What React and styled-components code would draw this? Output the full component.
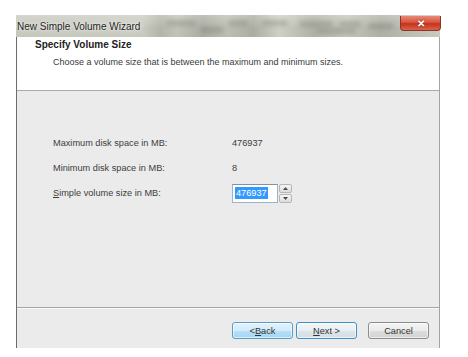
import React from "react";
import styled, { createGlobalStyle } from "styled-components";

const Global = createGlobalStyle`
  html, body { margin: 0; padding: 0; background: #ffffff; }
  body { font-family: "Liberation Sans", Arial, sans-serif; }
`;

const Page = styled.div`
  width: 468px;
  height: 357px;
  padding: 15px 0 0 16px;
  box-sizing: border-box;
  background: #ffffff;
`;

const Window = styled.div`
  width: 424px;
  height: 333px;
  display: flex;
  flex-direction: column;
`;

const TitleBar = styled.div`
  position: relative;
  height: 22px;
  display: flex;
  align-items: center;
  justify-content: space-between;
  overflow: visible;
  background:
    linear-gradient(180deg, rgba(255,255,255,0.25) 0%, rgba(255,255,255,0) 60%),
    linear-gradient(90deg, #c6c8bd 0%, #c9cabf 30%, #b3b4aa 34%, #c2c3b8 38%, #aaaba1 44%, #bdbeb3 50%, #abaca2 56%, #cfd0c5 62%, #b1b2a7 70%, #c4c5ba 78%, #aeafa5 86%, #cacbc0 100%);
`;

const Glass = styled.div`
  position: absolute;
  inset: 0;
  overflow: hidden;
  pointer-events: none;
`;

const Smudge = styled.span`
  position: absolute;
  height: 6px;
  border-radius: 3px;
  background: rgba(120, 122, 114, 0.35);
  filter: blur(2px);
`;

const Title = styled.span`
  position: relative;
  padding-left: 1px;
  font-size: 10px;
  color: #1d1d1d;
  text-shadow: 0 0 6px rgba(255,255,255,0.9), 0 0 2px rgba(255,255,255,0.9);
`;

const CloseButton = styled.div`
  position: relative;
  align-self: flex-start;
  margin-top: 1px;
  margin-right: -1px;
  width: 41px;
  height: 15px;
  box-sizing: border-box;
  border: 1px solid #8e3326;
  border-top: none;
  border-radius: 0 0 4px 4px;
  background: linear-gradient(180deg, #e98a77 0%, #d9553f 45%, #c5321c 55%, #d8654c 100%);
  display: flex;
  align-items: center;
  justify-content: center;
  color: #ffffff;
  font-size: 10px;
  font-weight: bold;
  text-shadow: 0 0 2px #7a2418;
`;

const Body = styled.div`
  flex: 1;
  display: flex;
  flex-direction: column;
  border-left: 1px solid #6c6c6c;
  border-right: 1px solid #a3a3a3;
  background: #ebebeb;
`;

const Header = styled.div`
  height: 51px;
  background: #ffffff;
  border-bottom: 1px solid #a9a9a9;
  padding-top: 2px;
  box-sizing: content-box;
  display: flex;
  flex-direction: column;
`;

const HeaderTitle = styled.div`
  padding-left: 18px;
  font-size: 10px;
  line-height: 12px;
  font-weight: bold;
  color: #222222;
`;

const HeaderSub = styled.div`
  margin-top: 5px;
  padding-left: 36px;
  font-size: 9px;
  line-height: 12px;
  color: #3a3a3a;
`;

const Content = styled.div`
  flex: 1;
  padding: 40px 0 0 36px;
  display: grid;
  grid-template-columns: 179px auto;
  grid-auto-rows: 24px;
  row-gap: 1px;
  align-content: start;
  align-items: center;
  background: #ebebeb;
`;

const Label = styled.div`
  font-size: 9.2px;
  color: #3d3d3d;
  u { text-decoration: underline; }
`;

const Value = styled.div`
  font-size: 9.2px;
  color: #3d3d3d;
`;

const Spin = styled.div`
  display: flex;
  align-items: stretch;
  gap: 1px;
  height: 19px;
`;

const SpinInput = styled.div`
  width: 46px;
  box-sizing: border-box;
  border: 1px solid #9fb3c8;
  border-top-color: #7f93a8;
  background: #ffffff;
  display: flex;
  align-items: center;
  padding-left: 2px;
`;

const Selected = styled.span`
  background: #3399ff;
  color: #ffffff;
  font-size: 9.2px;
  line-height: 12px;
  padding: 0 1px;
`;

const SpinButtons = styled.div`
  width: 13px;
  display: flex;
  flex-direction: column;
  gap: 1px;
`;

const SpinBtn = styled.div`
  flex: 1;
  box-sizing: border-box;
  border: 1px solid #b6b6b6;
  border-radius: 2px;
  background: linear-gradient(180deg, #f6f6f6, #dcdcdc);
  display: flex;
  align-items: center;
  justify-content: center;
`;

const Separator = styled.div`
  height: 1px;
  background: #a4a4a4;
  border-bottom: 1px solid #fafafa;
`;

const Footer = styled.div`
  height: 39px;
  display: flex;
  justify-content: flex-end;
  align-items: flex-start;
  padding: 13px 10px 0 0;
  box-sizing: border-box;
  background: #ebebeb;
`;

const variants = {
  hover: {
    bg: "linear-gradient(180deg, #e3f2fc 0%, #d2ebfb 50%, #b7e0f8 52%, #a3d5f2 100%)",
    border: "#5b9dc9",
  },
  default: {
    bg: "linear-gradient(180deg, #f3f6f8 0%, #e9eef2 50%, #dce4ea 52%, #d6dee5 100%)",
    border: "#3c91c5",
  },
  normal: {
    bg: "linear-gradient(180deg, #f4f4f4 0%, #ebebeb 50%, #dddddd 52%, #d2d2d2 100%)",
    border: "#8c8c8c",
  },
};

const Button = styled.div`
  width: 61px;
  height: 17px;
  margin-left: ${(p) => p.$gap}px;
  box-sizing: border-box;
  border: 1px solid ${(p) => variants[p.$variant].border};
  border-radius: 3px;
  background: ${(p) => variants[p.$variant].bg};
  box-shadow: inset 0 0 0 1px rgba(255,255,255,0.6);
  display: flex;
  align-items: center;
  justify-content: center;
  font-size: 9.2px;
  color: #333333;
  u { text-decoration: underline; }
`;

function Arrow({ up }) {
  return (
    <svg width="5" height="3" viewBox="0 0 5 3">
      <path d={up ? "M0 3 L2.5 0 L5 3 Z" : "M0 0 L2.5 3 L5 0 Z"} fill="#4a4a4a" />
    </svg>
  );
}

export default function App() {
  return (
    <>
      <Global />
      <Page>
        <Window>
          <TitleBar>
            <Glass>
              <Smudge style={{ left: 150, top: 5, width: 30 }} />
              <Smudge style={{ left: 185, top: 12, width: 22 }} />
              <Smudge style={{ left: 212, top: 5, width: 20 }} />
              <Smudge style={{ left: 246, top: 5, width: 26 }} />
              <Smudge style={{ left: 283, top: 6, width: 34 }} />
              <Smudge style={{ left: 323, top: 6, width: 22 }} />
              <Smudge style={{ left: 352, top: 8, width: 26 }} />
              <Smudge style={{ left: 300, top: 13, width: 40 }} />
            </Glass>
            <Title>New Simple Volume Wizard</Title>
            <CloseButton>✕</CloseButton>
          </TitleBar>
          <Body>
            <Header>
              <HeaderTitle>Specify Volume Size</HeaderTitle>
              <HeaderSub>Choose a volume size that is between the maximum and minimum sizes.</HeaderSub>
            </Header>
            <Content>
              <Label>Maximum disk space in MB:</Label>
              <Value>476937</Value>
              <Label>Minimum disk space in MB:</Label>
              <Value>8</Value>
              <Label><u>S</u>imple volume size in MB:</Label>
              <Spin>
                <SpinInput>
                  <Selected>476937</Selected>
                </SpinInput>
                <SpinButtons>
                  <SpinBtn><Arrow up /></SpinBtn>
                  <SpinBtn><Arrow /></SpinBtn>
                </SpinButtons>
              </Spin>
            </Content>
            <Separator />
            <Footer>
              <Button $variant="hover" $gap={0}>&lt; <u>B</u>ack</Button>
              <Button $variant="default" $gap={3}><u>N</u>ext &gt;</Button>
              <Button $variant="normal" $gap={11}>Cancel</Button>
            </Footer>
          </Body>
        </Window>
      </Page>
    </>
  );
}
